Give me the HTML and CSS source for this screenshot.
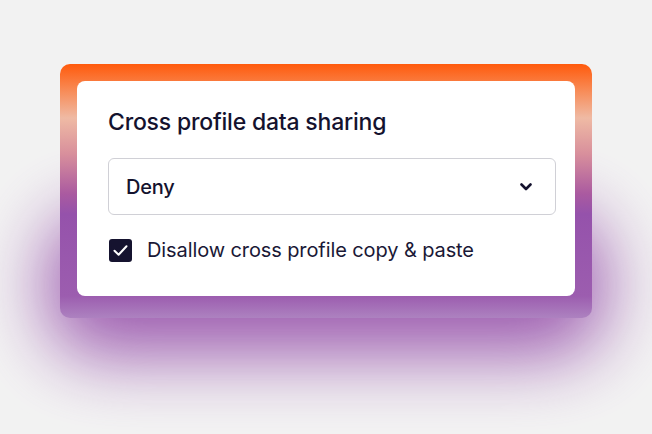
FILE: index.html
```html
<!DOCTYPE html>
<html>
<head>
<meta charset="utf-8">
<link rel="stylesheet" href="styles.css">
</head>
<body>
<div class="stage">
  <div class="glow"></div>
  <div class="frame">
    <div class="card">
      <h1 class="title">Cross profile data sharing</h1>
      <div class="select">
        <span class="select-value">Deny</span>
        <svg class="chevron" width="12" height="8" viewBox="0 0 12 8"><path d="M1.5 1.5 L6 6 L10.5 1.5" fill="none" stroke="#14122e" stroke-width="2.6" stroke-linecap="round" stroke-linejoin="round"/></svg>
      </div>
      <label class="check-row">
        <span class="checkbox">
          <svg width="23" height="23" viewBox="0 0 23 23"><path d="M5.5 11.8 L9.6 15.8 L17.5 7.2" fill="none" stroke="#fff" stroke-width="2" stroke-linecap="round" stroke-linejoin="round"/></svg>
        </span>
        <span class="check-label">Disallow cross profile copy &amp; paste</span>
      </label>
    </div>
  </div>
</div>
</body>
</html>
```
FILE: styles.css
```css
html, body {
  margin: 0;
  padding: 0;
  background: #f2f2f2;
}
body {
  width: 652px;
  height: 434px;
  overflow: hidden;
  font-family: Inter, "Liberation Sans", sans-serif;
  color: #14122e;
}
.stage {
  position: relative;
  padding: 64px 60px 0 60px;
}
.glow {
  position: absolute;
  left: 48px;
  right: 48px;
  top: 215px;
  height: 140px;
  border-radius: 50px;
  background: #9853ac;
  filter: blur(36px);
  opacity: 0.95;
}
.frame {
  position: relative;
  width: 532px;
  height: 254px;
  box-sizing: border-box;
  padding: 17px 17px 22px 17px;
  border-radius: 10px;
  background: linear-gradient(180deg,
    #ff5a0c 0px,
    #f88a55 26px,
    #efbaa4 54px,
    #d88f9c 90px,
    #aa5aa0 130px,
    #9552ab 150px,
    #9c5daf 232px,
    #ad82c0 254px);
}
.card {
  background: #fff;
  border-radius: 8px;
  height: 215px;
  box-sizing: border-box;
  padding: 25px 19px 0 31px;
}
.title {
  margin: 0;
  font-size: 23px;
  font-weight: 500;
  line-height: 32px;
  letter-spacing: -0.2px;
  color: #14122e;
}
.select {
  margin-top: 20px;
  height: 57px;
  box-sizing: border-box;
  border: 1.5px solid #d0d0d6;
  border-radius: 6px;
  display: flex;
  align-items: center;
  justify-content: space-between;
  padding: 0 23px 0 17px;
}
.select-value {
  font-size: 20px;
  font-weight: 500;
  letter-spacing: -0.2px;
}
.chevron {
  display: block;
}
.check-row {
  margin-top: 23px;
  display: flex;
  align-items: center;
  gap: 15px;
  margin-left: 1px;
}
.checkbox {
  width: 23px;
  height: 23px;
  border-radius: 3px;
  background: #15132f;
  display: flex;
}
.check-label {
  font-size: 20px;
  font-weight: 400;
  letter-spacing: -0.1px;
  color: #1a1836;
}
```
